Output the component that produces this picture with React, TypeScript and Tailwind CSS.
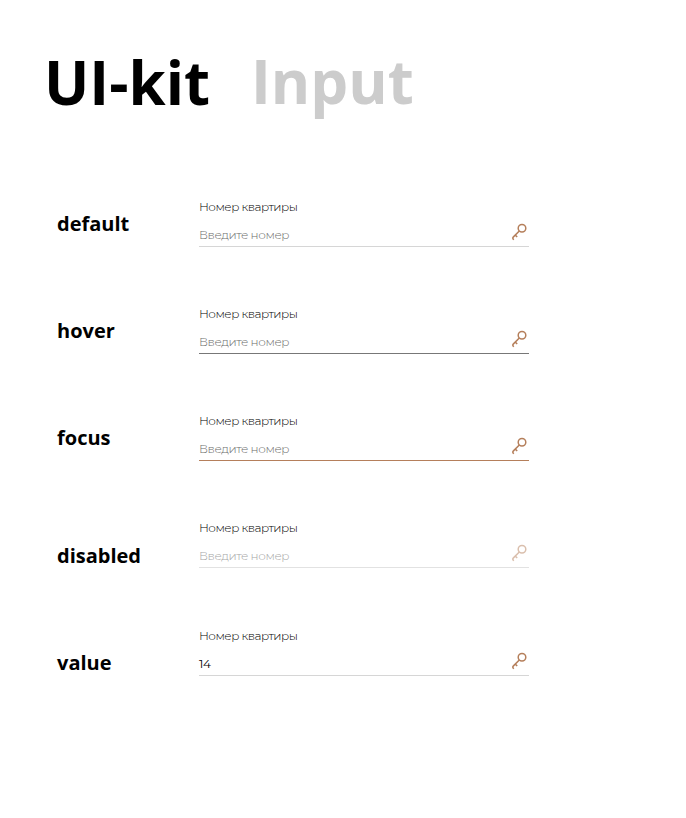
const rows = [
  { name: 'default', h: 'h-[107px]', pt: 'pt-[15px]', value: 'Введите номер', text: 'text-[#6c6c6c] font-light', line: 'border-[#d6d6d6]', icon: 'text-[#b57f5b]' },
  { name: 'hover', h: 'h-[107px]', pt: 'pt-[15px]', value: 'Введите номер', text: 'text-[#6c6c6c] font-light', line: 'border-[#777777]', icon: 'text-[#b57f5b]' },
  { name: 'focus', h: 'h-[107px]', pt: 'pt-[15px]', value: 'Введите номер', text: 'text-[#6c6c6c] font-light', line: 'border-[#b57f5b]', icon: 'text-[#b57f5b]' },
  { name: 'disabled', h: 'h-[108px]', pt: 'pt-[26px]', value: 'Введите номер', text: 'text-[#a6a6a6] font-light', line: 'border-[#e2e2e2]', icon: 'text-[#dabfad]' },
  { name: 'value', h: 'h-[107px]', pt: 'pt-[25px]', value: '14', text: 'text-black font-normal', line: 'border-[#d6d6d6]', icon: 'text-[#b57f5b]' },
];

function Key({ className }: { className: string }) {
  return (
    <svg width="16" height="18" viewBox="0 0 16 18" fill="none" stroke="currentColor" strokeWidth="1.5" className={className}>
      <circle cx="11" cy="5.3" r="3.8" />
      <path d="M8.3 8 2.2 14.1c-.8.8-.8 1.2 0 2l.6.6M4.3 12.1l1.9 1.9" />
    </svg>
  );
}

export default function App() {
  return (
    <main className="h-[818px] w-[686px] bg-white pl-[45px] font-['Open_Sans',sans-serif] text-black antialiased">
      <h1 className="-ml-px flex h-[199px] pt-[41px] text-[60px] leading-[83px] font-bold">
        <span className="w-[207px]">UI-kit</span>
        <span className="-mt-px text-[#cccccc]">Input</span>
      </h1>
      {rows.map((r) => (
        <section key={r.name} className={`flex pl-3 ${r.h}`}>
          <h2 className={`w-[142px] text-[20px] leading-[20px] font-bold ${r.pt}`}>{r.name}</h2>
          <label className={`flex h-[48px] w-[330px] flex-col border-b font-['Montserrat','Open_Sans',sans-serif] text-[12px] leading-4 ${r.line}`}>
            <span className="font-light tracking-[-0.5px] text-black">Номер квартиры</span>
            <span className={`mt-3 flex justify-between tracking-[-0.4px] ${r.text}`}>
              {r.value}
              <Key className={`-mt-1 mr-0.5 ${r.icon}`} />
            </span>
          </label>
        </section>
      ))}
    </main>
  );
}
